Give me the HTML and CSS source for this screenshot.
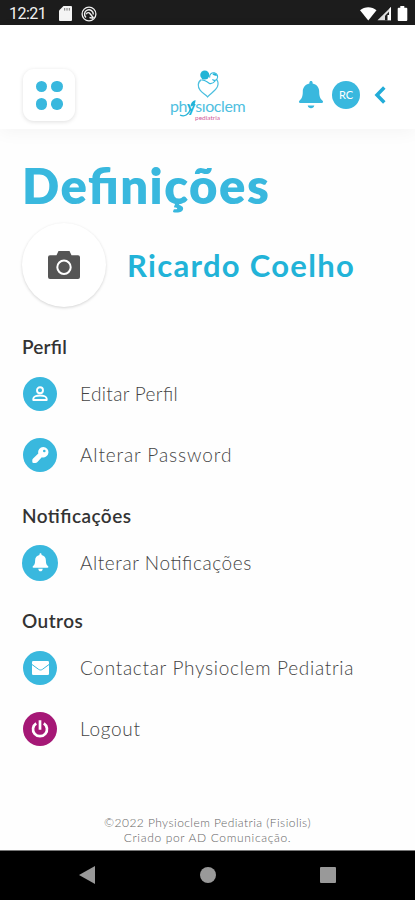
FILE: index.html
```html
<!DOCTYPE html>
<html lang="pt">

<head>
	<meta charset="UTF-8">
	<meta name="viewport" content="width=device-width, initial-scale=1.0">
	<title>Definições</title>
	<link rel="stylesheet" href="styles.css">
</head>

<body>
	<div class="status-bar">
		<span class="clock">12:21</span>
		<svg class="sd-card" width="13" height="15" viewBox="0 0 13 15">
			<path fill="#f4f4f4" d="M4.5 0H12a1 1 0 0 1 1 1v13a1 1 0 0 1-1 1H1a1 1 0 0 1-1-1V4.5z" />
			<path stroke="#777" stroke-width="1" d="M5.7 2v2.6M8 2v2.6M10.3 2v2.6" />
		</svg>
		<svg class="at-badge" width="16" height="16" viewBox="0 0 16 16" fill="none" stroke="#f0f0f0">
			<circle cx="8" cy="8" r="6.9" stroke-width="1.3" />
			<path stroke-width="1.4" d="M5 11.500A4.400 4.400 0 1 1 12.300 8.500M5.300 8.300c.8-2.200 2.700-2 3.800-.6l3.400 4.300M8.500 11.500l3.800.9" />
		</svg>
		<svg class="signals" width="48" height="16" viewBox="0 0 48 16">
			<path fill="#fff" d="M0 4.2C4.7.3 11.800.3 16.500 4.2L8.300 14.500z" />
			<path fill="#ddd" d="M17.500 14.300L31 1v13.300z" />
			<path fill="#1c1c1c" d="M25 14.300V9.700l4-4v8.600z" />
			<path fill="#fff" d="M27.500 9h1.700v5.300h-1.700zM29.500 2.500L31 1v13.300h-1.500z" />
			<path fill="#fff" d="M40.300 0h4v1.800h2a1 1 0 0 1 1 1V14a1 1 0 0 1-1 1h-7.600a1 1 0 0 1-1-1V2.800a1 1 0 0 1 1-1h1.600z" />
		</svg>
	</div>

	<header class="header">
		<button class="menu-button" aria-label="Menu">
			<span></span><span></span><span></span><span></span>
		</button>

		<div class="logo">
			<svg class="logo-mark" width="25" height="29" viewBox="0 0 26 31" fill="none">
				<circle cx="9" cy="5.3" r="4.8" fill="#20b4d6" />
				<path stroke="#36bade" stroke-width="1.2" d="M14.300 8.200a4.300 4.300 0 1 1 7.700 1.500c-1 1.500-3.500 2-4.800.3" />
				<path fill="#20b4d6" d="M17 4.200c2.200-1.700 4.800 0 5 2.400-1.700-.9-3.700-.7-5-2.400z" />
				<path stroke="#4bbfdf" stroke-width="1.300" d="M5.500 10.300C1 13 1.400 18 4 21.600c2.100 3 5.500 4.500 8 7.200 2.600-3.600 8.300-6 10.600-11.100 1-2.700.8-5.300-.9-7.300" />
				<path stroke="#36bade" stroke-width="1.300" d="M6 10.500c3 .1 5.600 2.100 8.300 4 2.800.4 4.400-.8 5.900-3" />
			</svg>
			<div class="logo-name">ph<span class="logo-y">y</span>sıoclem</div>
			<div class="logo-sub">pediatria</div>
			<svg class="logo-swoosh" width="18" height="20" viewBox="0 0 18 20" fill="none">
				<path stroke="#22b3d8" stroke-width="1.300" d="M1 17c5 2.500 9-1 10.500-6" />
				<path fill="#22b3d8" d="M11.500 8.500c.2-3.200 1.500-5.500 5-6.500-.1 3.500-1.200 6-5 6.500z" />
			</svg>
		</div>

		<div class="actions">
			<svg width="26" height="28" viewBox="0 0 26 28" fill="#39b8de">
				<path d="M13 0c.9 0 1.600.7 1.600 1.600v.9c4 .8 6.600 3.900 6.600 8 0 5.300 1.300 7.500 3.400 9.200.9.800.5 2.300-.9 2.300H2.300c-1.400 0-1.800-1.500-.9-2.300 2.100-1.700 3.400-3.900 3.400-9.200 0-4.100 2.600-7.200 6.600-8v-.9C11.400.7 12.100 0 13 0z" />
				<path d="M9.700 24.500h6.600c-.3 1.700-1.600 2.700-3.300 2.700s-3-1-3.300-2.700z" />
			</svg>
			<span class="initials">RC</span>
			<svg class="back" width="12" height="18" viewBox="0 0 12 18">
				<path fill="none" stroke="#22acd8" stroke-width="3.500" d="M10.300 1.600L3 9l7.300 7.400" />
			</svg>
		</div>
	</header>

	<main class="content">
		<h1>Definições</h1>

		<div class="profile">
			<div class="avatar">
				<svg width="32" height="28" viewBox="0 0 32 28">
					<path fill="#555" d="M10.500 0h11l2 4.200H30a2 2 0 0 1 2 2V26a2 2 0 0 1-2 2H2a2 2 0 0 1-2-2V6.200a2 2 0 0 1 2-2h6.500z" />
					<circle cx="16" cy="16.300" r="6.700" fill="none" stroke="#fff" stroke-width="2" />
				</svg>
			</div>
			<span class="name">Ricardo Coelho</span>
		</div>

		<section class="group">
			<h2 class="title-perfil">Perfil</h2>
			<a class="item">
				<span class="icon">
					<svg width="16" height="16" viewBox="0 0 16 16" fill="none" stroke="#fff" stroke-width="1.900">
						<circle cx="8" cy="4.300" r="3" />
						<path stroke-linejoin="round" d="M1.300 14v-1.200c0-2 3.200-3.300 6.700-3.300s6.700 1.300 6.700 3.300V14z" />
					</svg>
				</span>
				<span class="label-edit">Editar Perfil</span>
			</a>
			<a class="item">
				<span class="icon">
					<svg width="17" height="16" viewBox="0 0 17 16">
						<path fill="#fff" d="M11.200 0a5.200 5.200 0 1 1-1.400 10.200L5.200 15.200Q4.400 16 3.400 16H1.600Q.3 16 .3 14.700V13.200Q.3 12.200 1.100 11.400L6.300 6.400A5.200 5.200 0 0 1 11.200 0z" />
						<circle cx="12.300" cy="4" r="1.300" fill="#39b8de" />
					</svg>
				</span>
				<span class="label-password">Alterar Password</span>
			</a>
		</section>

		<section class="group">
			<h2 class="title-notifications">Notificações</h2>
			<a class="item">
				<span class="icon large">
					<svg width="17" height="19" viewBox="0 0 26 28" fill="#fff">
						<path d="M13 0c.9 0 1.600.7 1.600 1.600v.9c4 .8 6.600 3.900 6.600 8 0 5.300 1.300 7.500 3.400 9.200.9.800.5 2.300-.9 2.300H2.300c-1.400 0-1.800-1.500-.9-2.300 2.100-1.700 3.400-3.900 3.400-9.200 0-4.100 2.600-7.200 6.600-8v-.9C11.400.7 12.100 0 13 0z" />
						<path d="M9.500 23.500h7c-.3 2.500-1.800 4-3.500 4s-3.200-1.500-3.500-4z" />
					</svg>
				</span>
				<span class="label-notifications">Alterar Notificações</span>
			</a>
		</section>

		<section class="group">
			<h2 class="title-others">Outros</h2>
			<a class="item">
				<span class="icon">
					<svg width="17" height="14" viewBox="0 0 17 14">
						<rect width="17" height="14" rx="1.300" fill="#fff" />
						<path fill="none" stroke="#39b8de" stroke-width="1" d="M0 3.500l6.500 4.800c1.300.9 2.700.9 4 0L17 3.500" />
					</svg>
				</span>
				<span class="label-contact">Contactar Physioclem Pediatria</span>
			</a>
			<a class="item">
				<span class="icon logout">
					<svg width="18" height="18" viewBox="0 0 18 18" fill="none" stroke="#fff" stroke-width="2.700">
						<path d="M5.200 3.300a7 7 0 1 0 7.600 0M9 .2v9.500" />
					</svg>
				</span>
				<span class="label-logout">Logout</span>
			</a>
		</section>
	</main>

	<footer class="footer">
		<p class="copyright">©2022 Physioclem Pediatria (Fisiolis)</p>
		<p class="credits">Criado por AD Comunicação.</p>
	</footer>

	<nav class="nav-bar">
		<svg width="16" height="18" viewBox="0 0 16 18"><path fill="#999" d="M16 0v18L0 9z" /></svg>
		<span class="nav-home"></span>
		<span class="nav-recent"></span>
	</nav>
</body>

</html>
```

FILE: styles.css
```css
* {
	margin: 0;
	padding: 0;
	box-sizing: border-box;
}

body {
	display: flex;
	flex-direction: column;
	height: 900px;
	overflow: hidden;
	background-color: #fefefe;
	font-family: Lato, sans-serif;
	font-feature-settings: "liga" 1;
	color: #444;
}

svg {
	display: block;
	flex-shrink: 0;
}

.status-bar {
	display: flex;
	align-items: center;
	height: 25px;
	padding: 2px 7px 0 9px;
	background-color: #1c1c1c;
	color: #f2f2f2;
	font: 400 16px Roboto, sans-serif;
	letter-spacing: -0.5px;
}

.clock {
	width: 50px;
}

.at-badge {
	margin-left: 9px;
}

.signals {
	margin-left: auto;
}

.header {
	display: flex;
	justify-content: space-between;
	height: 104px;
	padding: 44px 29px 0 23px;
	background-color: #fff;
	box-shadow: 0 4px 16px rgba(0, 0, 0, 0.04);
}

.menu-button {
	display: grid;
	grid-template-columns: 11.5px 11.5px;
	gap: 6px 4px;
	place-content: center;
	width: 52px;
	height: 52px;
	border: none;
	border-radius: 11px;
	background-color: #fff;
	box-shadow: 0 1px 4px rgba(0, 0, 0, 0.13);
}

.menu-button span {
	height: 11.5px;
	border-radius: 50%;
	background-color: #39b8de;
}

.logo {
	position: relative;
	width: 76px;
	margin-left: 43px;
	white-space: nowrap;
}

.logo-mark {
	margin: 1px 0 0 26px;
}

.logo-name {
	margin-top: -1px;
	font-size: 16px;
	font-weight: 400;
	line-height: 15px;
	letter-spacing: -0.4px;
	color: #4fc0df;
}

.logo-y {
	font-weight: 700;
	color: #22b3d8;
}

.logo-sub {
	margin: 1px 0 0 25px;
	font-size: 6.5px;
	line-height: 8px;
	color: #d0609c;
}

.logo-swoosh {
	position: absolute;
	left: 9px;
	top: 29px;
}

.actions {
	display: flex;
	align-items: center;
	height: 52px;
}

.initials {
	width: 28px;
	height: 28px;
	margin: 0 14px 0 8px;
	border-radius: 50%;
	background-color: #39b8de;
	color: #fff;
	font-size: 11px;
	line-height: 28px;
	text-align: center;
}

.content {
	flex: 1;
	padding: 26px 22px 0;
}

h1 {
	height: 60px;
	font-size: 49px;
	font-weight: 800;
	line-height: 60px;
	letter-spacing: 1.5px;
	color: #39b8de;
}

.profile {
	display: flex;
	align-items: center;
	height: 84px;
	margin: 8px 0 28px;
}

.avatar {
	display: grid;
	place-items: center;
	width: 84px;
	height: 84px;
	margin-right: 21px;
	border-radius: 50%;
	background-color: #fff;
	box-shadow: 0 1px 3px rgba(0, 0, 0, 0.17);
}

.name {
	font-size: 31px;
	font-weight: 700;
	letter-spacing: 1.3px;
	color: #22b3d8;
	white-space: nowrap;
}

.group {
	margin-bottom: 16px;
}

.group:nth-of-type(1) {
	margin-bottom: 19px;
}

h2 {
	height: 24px;
	margin-bottom: 4px;
	font-size: 19px;
	font-weight: 600;
	line-height: 24px;
	color: #333;
}

.title-perfil {
	letter-spacing: 0.2px;
}

.title-notifications,
.title-others {
	letter-spacing: 0.45px;
}

.item {
	display: flex;
	align-items: center;
	height: 61px;
	font-size: 19px;
	font-weight: 300;
	white-space: nowrap;
}

.label-edit {
	letter-spacing: 0.35px;
}

.label-password {
	letter-spacing: 0.9px;
}

.label-notifications {
	letter-spacing: 0.58px;
}

.label-contact,
.label-logout {
	letter-spacing: 0.7px;
}

.icon {
	display: grid;
	place-items: center;
	width: 34px;
	height: 34px;
	margin: 0 23px 0 1px;
	border-radius: 50%;
	background-color: #39b8de;
}

.icon.large {
	width: 36px;
	height: 36px;
	margin: 0 22px 0 0;
}

.icon.logout {
	background-color: #a51876;
}

.footer {
	height: 35px;
	font-size: 12px;
	font-weight: 300;
	line-height: 15px;
	text-align: center;
	color: #666;
}

.copyright {
	letter-spacing: 0.44px;
}

.credits {
	letter-spacing: 0.66px;
}

.nav-bar {
	display: flex;
	align-items: center;
	justify-content: space-between;
	height: 50px;
	padding: 0 79px 1px;
	border-top: 1px solid #777;
	background-color: #000;
}

.nav-home,
.nav-recent {
	width: 16px;
	height: 16px;
	border-radius: 50%;
	background-color: #999;
}

.nav-recent {
	border-radius: 1px;
}
```
